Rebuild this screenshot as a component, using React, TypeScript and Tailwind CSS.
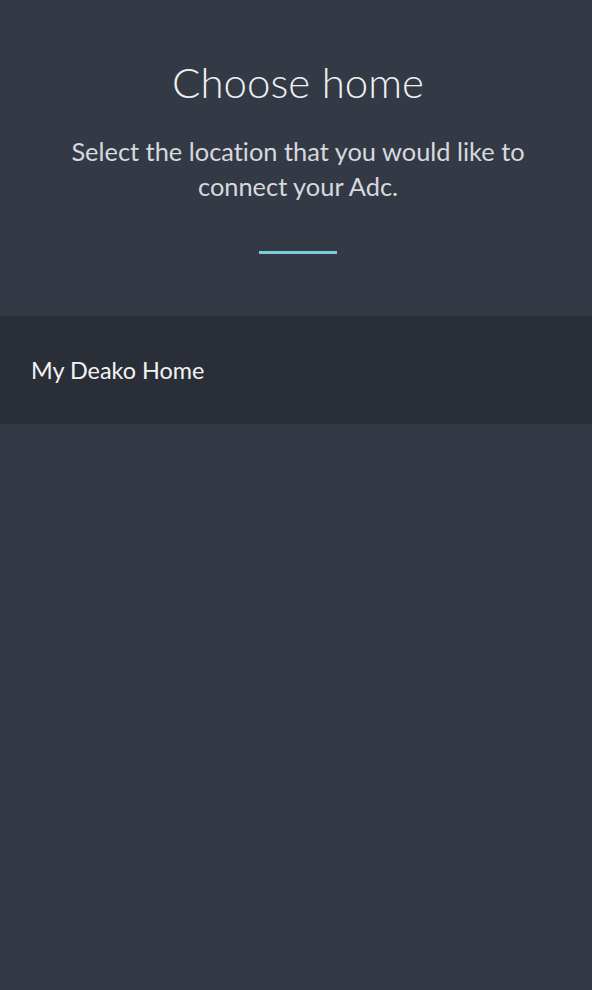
export default function App() {
  return (
    <div className="min-h-[990px] w-full bg-[#343a45] font-['Lato','Open_Sans',sans-serif] [font-variant-ligatures:none]">
      <div className="flex flex-col items-center pl-[36px] pr-[32px] pt-[54px] pb-[62px]">
        <h1 className="text-[42px] font-light leading-[56px] text-[#eef0f2]">Choose home</h1>
        <p className="mt-[24px] text-center text-[25.4px] leading-[35px] text-[#d6d9dd]">
          Select the location that you would like to
          <br />
          connect your Adc.
        </p>
        <div className="mt-[47px] h-[3px] w-[78px] bg-[#7ccbe0]" />
      </div>
      <div className="flex h-[108px] items-center bg-[#2a2e37] px-[31px] pt-[2px]">
        <span className="text-[23.4px] text-[#f2f3f5]">My Deako Home</span>
      </div>
    </div>
  );
}
